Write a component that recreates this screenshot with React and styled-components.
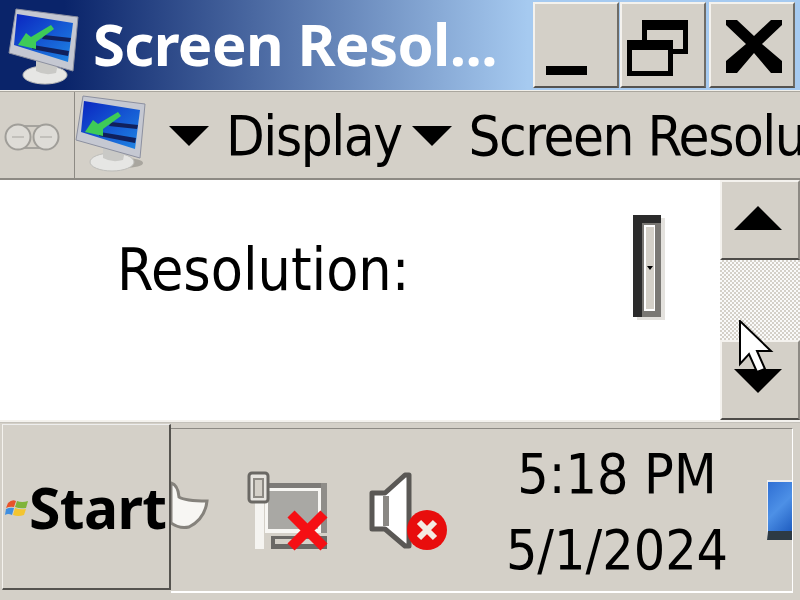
import React from "react";
import styled, { createGlobalStyle } from "styled-components";

const Global = createGlobalStyle`
  html, body { margin: 0; padding: 0; background: #d4d0c8; }
  body { width: 800px; height: 600px; overflow: hidden; font-family: "DejaVu Sans", "Noto Sans", sans-serif; font-stretch: condensed; }
`;
const Screen = styled.div`
  position: relative; width: 800px; height: 600px; display: flex; flex-direction: column;
  overflow: hidden; background: #d4d0c8; color: #000;
`;
const TitleBar = styled.div`
  height: 90px; flex: none; display: flex; align-items: center; box-sizing: border-box;
  background: linear-gradient(90deg, #0a246a 0%, #0a246a 8%, #a6caf0 66%, #a6caf0 100%);
`;
const TitleIcon = styled.div`
  width: 93px; height: 90px; flex: none; display: flex; align-items: center;
`;
const TitleText = styled.div`
  width: 440px; flex: none; font-family: "Noto Sans", sans-serif; font-stretch: normal; font-weight: 700;
  font-size: 58px; letter-spacing: -0.6px; line-height: 90px; height: 90px; color: #fff; white-space: nowrap;
  margin-top: -2px;
`;
const WinButtons = styled.div`
  display: flex; gap: 1px; align-items: flex-start; height: 90px; padding-top: 2px; box-sizing: border-box;
`;
const WinButton = styled.div`
  width: 86px; height: 86px; box-sizing: border-box; background: #d4d0c8; margin-right: ${p => p.$gap || 0}px;
  border-top: 2px solid #f4f2ee; border-left: 2px solid #f4f2ee; border-right: 2px solid #6f6c66; border-bottom: 2px solid #55534f;
  display: flex; align-items: center; justify-content: center;
`;
const Divider = styled.div`
  height: 2px; flex: none; background: #f1efea; box-shadow: inset 0 -1px 0 #aaa69e;
`;
const ToolBar = styled.div`
  height: 86px; flex: none; display: flex; align-items: center; overflow: hidden; background: #d4d0c8;
  border-bottom: 2px solid #8d8a84; box-sizing: content-box;
`;
const BackCell = styled.div`
  width: 75px; height: 86px; flex: none; box-sizing: border-box; border-right: 1px solid #8d8a84;
  display: flex; align-items: center; padding-left: 4px; padding-top: 3px;
`;
const Crumb = styled.div`
  font-size: 56px; letter-spacing: -1.45px; line-height: 86px; height: 86px; white-space: nowrap; flex: none; color: #000;
  margin-left: ${p => p.$ml || 0}px; margin-top: 2px;
`;
const CrumbArrow = styled.div`
  width: 0; height: 0; flex: none; border-left: 20px solid transparent; border-right: 20px solid transparent;
  border-top: 20px solid #000; margin-left: ${p => p.$ml}px; margin-top: 2px;
`;
const ToolIcon = styled.div`
  flex: none; display: flex; margin: -6px 0 0 -8px;
`;
const Content = styled.div`
  height: 240px; flex: none; display: flex; background: #fff;
`;
const FormArea = styled.div`
  flex: 1; display: flex; align-items: flex-start; padding-left: 117px;
`;
const FieldLabel = styled.div`
  font-size: 58.5px; line-height: 80px; margin-top: 50px; width: 516px; flex: none; white-space: nowrap;
`;
const MiniCombo = styled.div`
  width: 28px; height: 102px; margin-top: 35px; box-sizing: border-box;
  background: #7a7874; border-left: 9px solid #2b2b2b; border-top: 8px solid #2b2b2b;
  box-shadow: 4px 3px 0 #e4e2de; padding: 2px 6px 6px 2px; display: flex;
`;
const ComboInner = styled.div`
  flex: 1; background: #d4d0c8; border-left: 2px solid #fff; border-right: 1px solid #fff; border-top: 2px solid #fff; border-bottom: 2px solid #fff;
  display: flex; align-items: center; justify-content: center;
`;
const ComboArrow = styled.div`
  width: 0; height: 0; border-left: 3px solid transparent; border-right: 3px solid transparent; border-top: 4px solid #000;
`;
const ScrollBar = styled.div`
  width: 80px; flex: none; display: flex; flex-direction: column;
`;
const ScrollButton = styled.div`
  height: 80px; flex: none; box-sizing: border-box; background: #d4d0c8;
  border-top: 2px solid #f4f2ee; border-left: 2px solid #f4f2ee; border-right: 2px solid #8d8a84; border-bottom: 2px solid #4d4b48;
  display: flex; align-items: center; justify-content: center; padding-right: 4px;
`;
const ScrollTrack = styled.div`
  flex: 1; background-color: #fff;
  background-image: repeating-conic-gradient(#d4d0c8 0 25%, #fafafa 0 50%); background-size: 4px 4px;
`;
const Triangle = styled.div`
  width: 0; height: 0; border-left: 24px solid transparent; border-right: 24px solid transparent;
  ${p => p.$up ? "border-bottom: 24px solid #000; margin-top:-4px;" : "border-top: 24px solid #000; margin-top:1px;"}
`;
const Cursor = styled.svg`
  position: absolute; left: 738px; top: 320px; width: 36px; height: 54px;
`;
const TaskBar = styled.div`
  flex: 1; box-sizing: border-box; padding: 2px 7px 7px 2px; display: flex;
  border-top: 2px solid #f4f2ee; box-shadow: inset 0 1px 0 #c4c1ba; background: #d4d0c8; align-items: stretch;
`;
const StartButton = styled.div`
  width: 169px; flex: none; box-sizing: border-box; border-left: 1px solid #f4f2ee; border-top: 1px solid #eee;
  border-right: 2px solid #55534f; border-bottom: 2px solid #55534f; display: flex; align-items: center;
  gap: 0; padding-left: 2px; height: 166px; background: #d4d0c8;
`;
const StartText = styled.div`
  font-family: "Noto Sans", sans-serif; font-stretch: normal; font-weight: 700; font-size: 57px;
  line-height: 60px; letter-spacing: -0.6px;
`;
const Tray = styled.div`
  flex: 1; display: flex; box-sizing: border-box; margin-top: 4px; border-top: 1px solid #8d8a84;
  border-right: 1px solid #fff; border-bottom: 2px solid #fff; align-items: center; overflow: hidden;
`;
const TrayIcon = styled.div`
  flex: none; margin-left: ${p => p.$ml}px; display: flex; margin-top: ${p => p.$mt || 0}px;
`;
const Clock = styled.div`
  flex: none; width: 240px; margin-left: 48px; text-align: center; font-size: 55px; line-height: 76px; white-space: nowrap; margin-top: 4px;
`;
const DesktopTile = styled.div`
  width: 26px; height: 60px; flex: none; margin-left: 30px; box-sizing: border-box;
  background: linear-gradient(135deg, #2f6fd4, #4d90e6 50%, #1e5cc0); border-bottom: 9px solid #2d3a44; border-top: 2px solid #eee; border-left: 1px solid #eee;
`;

const Monitor = ({ shadow }) => (
  <svg width="86" height="86" viewBox="0 0 86 86" style={{ flex: "none" }}>
    <defs>
      <linearGradient id={shadow ? "sa" : "sb"} x1="0" y1="0" x2="1" y2="1">
        <stop offset="0" stopColor="#0a25c0" />
        <stop offset="1" stopColor="#1f86e4" />
      </linearGradient>
    </defs>
    {shadow && <ellipse cx="58" cy="74" rx="18" ry="5" fill="#a9a69f" />}
    <ellipse cx="45" cy="73" rx="22" ry="9" fill="#e6e6e4" stroke="#bdbdba" />
    <path d="M36 58 L58 62 L56 71 Q45 74 36 69 Z" fill="#c9c9c6" />
    <path d="M16 7 L78 15 L73 69 L9 51 Z" fill="#c5c8d2" stroke="#8c90a0" />
    <path d="M17 12 L73 21 L68 60 L14 43 Z" fill={`url(#${shadow ? "sa" : "sb"})`} />
    <path d="M44 33 L71 36 L70 40 L42 37 Z M33 43 L69 49 L68 54 L32 47 Z" fill="#10205c" />
    <path d="M51 23 L31 35 L26 31 L18 43 L36 47 L36 40 L54 27 Z" fill="#3ecb58" />
  </svg>
);

const WinLogo = () => (
  <svg width="24" height="26" viewBox="0 0 24 26" style={{ flex: "none" }}>
    <path d="M3 9 Q7 5 11 7 L9 13 Q5 12 1 14 Z" fill="#e8532a" />
    <path d="M12 7 Q17 9 23 7 L21 14 Q15 15 10 13 Z" fill="#7fb43a" />
    <path d="M1 15 Q5 13 9 14 L7 21 Q3 19 0 21 Z" fill="#3f8ee0" />
    <path d="M10 14 Q15 16 21 15 L19 21 Q13 23 8 21 Z" fill="#f3c531" />
  </svg>
);

export default function App() {
  return (
    <Screen>
      <Global />
      <TitleBar>
        <TitleIcon><Monitor /></TitleIcon>
        <TitleText>Screen Resol...</TitleText>
        <WinButtons>
          <WinButton>
            <svg width="60" height="60" viewBox="0 0 60 60"><rect x="0" y="51" width="41" height="9" /></svg>
          </WinButton>
          <WinButton $gap={2}>
            <svg width="66" height="66" viewBox="0 0 66 66" fill="none" style={{ marginRight: 6, marginTop: 6 }}>
              <rect x="17.5" y="7.5" width="41" height="29" stroke="#000" strokeWidth="5" />
              <rect x="15" y="5" width="46" height="10" fill="#000" />
              <rect x="2.5" y="27.5" width="41" height="31" fill="#d4d0c8" stroke="#000" strokeWidth="5" />
              <rect x="0" y="25" width="46" height="10" fill="#000" />
            </svg>
          </WinButton>
          <WinButton>
            <svg width="60" height="60" viewBox="0 0 60 60" style={{ marginLeft: 3, marginTop: -2 }}><path d="M2 6 H13 L30 22 L47 6 H58 V11 L38 30 L58 47 V59 H47 L30 39 L13 59 H2 V47 L22 30 L2 11 Z" /></svg>
          </WinButton>
        </WinButtons>
      </TitleBar>
      <Divider />
      <ToolBar>
        <BackCell>
          <svg width="56" height="30" viewBox="0 0 56 30">
            <path d="M20 4 H36 M20 26 H36" stroke="#a5a39e" strokeWidth="2" />
            <circle cx="14" cy="15" r="12.5" fill="#dedcd7" stroke="#a09e99" strokeWidth="2" />
            <circle cx="42" cy="15" r="12.5" fill="#dedcd7" stroke="#a09e99" strokeWidth="2" />
            <path d="M8 15 H20 M36 15 H48" stroke="#c2c0bb" strokeWidth="2" />
          </svg>
        </BackCell>
        <ToolIcon><Monitor shadow /></ToolIcon>
        <CrumbArrow $ml={16} />
        <Crumb $ml={17}>Display</Crumb>
        <CrumbArrow $ml={10} />
        <Crumb $ml={17}>Screen Resolution</Crumb>
      </ToolBar>
      <Content>
        <FormArea>
          <FieldLabel>Resolution:</FieldLabel>
          <MiniCombo><ComboInner><ComboArrow /></ComboInner></MiniCombo>
        </FormArea>
        <ScrollBar>
          <ScrollButton><Triangle $up /></ScrollButton>
          <ScrollTrack />
          <ScrollButton><Triangle /></ScrollButton>
        </ScrollBar>
      </Content>
      <TaskBar>
        <StartButton>
          <WinLogo />
          <StartText>Start</StartText>
        </StartButton>
        <Tray>
          <TrayIcon $ml={0} $mt={-8}>
            <svg width="38" height="50" viewBox="0 0 38 50">
              <path d="M0 2 Q7 4 8 16 Q14 20 36 20 Q34 38 18 46 Q8 48 0 42 Z" fill="#f7f6f3" stroke="#85827c" strokeWidth="3" />
            </svg>
          </TrayIcon>
          <TrayIcon $ml={38} $mt={2}>
            <svg width="82" height="80" viewBox="0 0 82 80">
              <rect x="8" y="31" width="9" height="47" fill="#f5f4f1" />
              <rect x="17" y="12" width="63" height="5" fill="#7d7b78" />
              <rect x="74" y="12" width="6" height="50" fill="#8f8d89" />
              <rect x="18" y="17" width="56" height="45" fill="#f7f6f3" />
              <rect x="21" y="20" width="50" height="38" fill="#a9a8a4" />
              <rect x="24" y="65" width="56" height="13" fill="#6a6865" />
              <rect x="28" y="68" width="48" height="5" fill="#d4d0c8" />
              <rect x="2" y="2" width="19" height="29" rx="3" fill="#e7e5e0" stroke="#6a6864" strokeWidth="3" />
              <rect x="7" y="8" width="9" height="18" fill="#d4d0c8" stroke="#8d8a84" strokeWidth="2" />
              <path d="M44 43 L77 76 M77 43 L44 76" stroke="#f50f14" strokeWidth="10" />
            </svg>
          </TrayIcon>
          <TrayIcon $ml={40} $mt={2}>
            <svg width="80" height="80" viewBox="0 0 80 80">
              <path d="M3 22 H16 L36 4 H40 V75 H36 L16 58 H3 Z" fill="#fff" stroke="#5a5855" strokeWidth="5" strokeLinejoin="round" />
              <rect x="14" y="25" width="6" height="30" fill="#8a8884" />
              <circle cx="58" cy="59" r="20" fill="#e80d0d" />
              <path d="M50 51 L66 67 M66 51 L50 67" stroke="#f4e9e2" strokeWidth="6" />
            </svg>
          </TrayIcon>
          <Clock>5:18 PM<br />5/1/2024</Clock>
          <DesktopTile />
        </Tray>
      </TaskBar>
      <Cursor viewBox="0 0 36 54">
        <path d="M2 1 V44 L11 34 L19 52 L27 49 L19 31 L33 31 Z" fill="#fff" stroke="#000" strokeWidth="2" />
      </Cursor>
    </Screen>
  );
}
